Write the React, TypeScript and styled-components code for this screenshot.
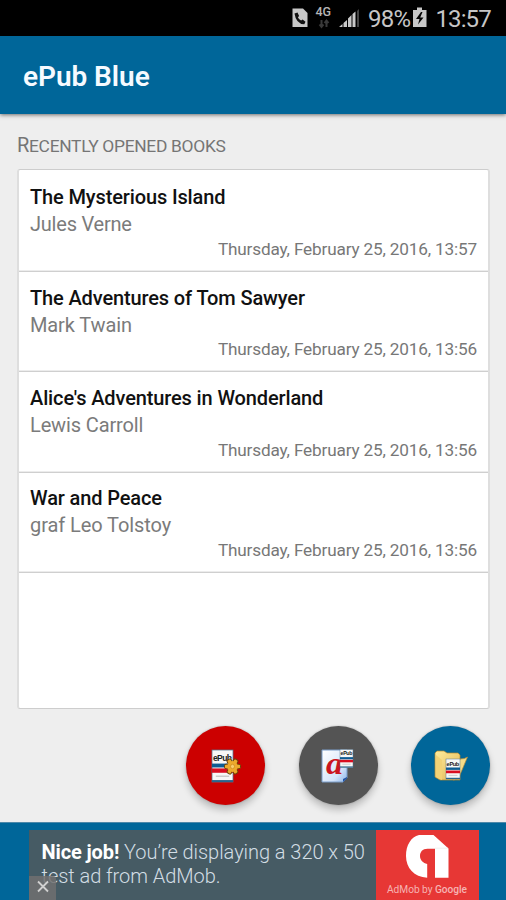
import React from 'react';
import styled, { createGlobalStyle } from 'styled-components';

const GlobalStyle = createGlobalStyle`
  * { box-sizing: border-box; }
  body { margin: 0; background: #eee; font-family: Roboto, sans-serif; }
  svg { display: block; }
`;

const Screen = styled.div`
  width: 506px;
  height: 900px;
  display: flex;
  flex-direction: column;
  overflow: hidden;
  background: #eee;
  white-space: nowrap;
`;

const StatusBar = styled.div`
  flex: none;
  height: 36px;
  display: flex;
  align-items: center;
  background: #000;
  color: #c6c6c6;
  padding-left: 288px;
`;

const StatusIcons = styled.div`
  display: flex;
  width: 73px;
  justify-content: space-between;
`;

const StatusText = styled.span<{ $gap: number; $spacing?: number }>`
  margin-left: ${p => p.$gap}px;
  font-size: 24px;
  line-height: 36px;
  padding-top: 1px;
  letter-spacing: ${p => p.$spacing ?? 0}px;
`;

const Header = styled.header`
  flex: none;
  height: 78px;
  padding: 3px 0 0 23px;
  display: flex;
  align-items: center;
  background: #006699;
  box-shadow: 0 1px 4px rgba(0, 0, 0, 0.55);
  z-index: 1;
`;

const Title = styled.h1`
  margin: 0;
  color: #f6faff;
  font-size: 28px;
  font-weight: 600;
  letter-spacing: -0.05px;
`;

const Content = styled.main`
  flex: none;
  height: 708px;
  padding: 18px 16px 0 17px;
  display: flex;
  flex-direction: column;
`;

const SectionTitle = styled.h2`
  margin: 0;
  height: 37px;
  line-height: 27px;
  font-size: 17.4px;
  letter-spacing: -0.3px;
  font-weight: 400;
  color: #757575;
  text-transform: uppercase;
  &::first-letter { font-size: 20px; }
`;

const BookList = styled.ul`
  margin: 0;
  padding: 0;
  list-style: none;
  height: 540px;
  background: #fff;
  border: 1px solid #cdcdcd;
  border-left: 2px solid #dedede;
  border-right: 2px solid #dedede;
  border-radius: 3px;
`;

const BookRow = styled.li`
  height: 100.33px;
  padding: 12.7px 11px 0;
  display: flex;
  flex-direction: column;
  box-shadow: inset 0 -1px #cfcfcf, inset 0 -2px #ececec;
  &:first-child { height: 102px; padding-top: 14px; }
`;

const BookTitle = styled.span`
  font-size: 20px;
  line-height: 27px;
  font-weight: 500;
  color: #111;
  letter-spacing: -0.13px;
`;

const Author = styled.span<{ $spacing: number }>`
  font-size: 20px;
  line-height: 26.5px;
  color: #7b7b7b;
  letter-spacing: ${p => p.$spacing}px;
`;

const Opened = styled.time`
  align-self: flex-end;
  font-size: 17.2px;
  line-height: 23.5px;
  letter-spacing: -0.17px;
  color: #777;
`;

const Actions = styled.div`
  display: flex;
  justify-content: flex-end;
  gap: 33.5px;
  margin-top: 17px;
`;

const RoundButton = styled.button<{ $color: string }>`
  width: 79px;
  height: 79px;
  flex: none;
  padding: 0;
  border: 0;
  border-radius: 50%;
  display: grid;
  place-items: center;
  background: ${p => p.$color};
  box-shadow: 0 5px 7px rgba(0, 0, 0, 0.22), 0 0 2px rgba(0, 0, 0, 0.25);
`;

const Banner = styled.footer`
  flex: 1;
  display: flex;
  justify-content: center;
  padding: 7px 0 0 1px;
  border-top: 1px solid #4d88a9;
  background: #006699;
`;

const Ad = styled.div`
  position: relative;
  width: 450px;
  display: flex;
  background: #465b64;
`;

const AdCopy = styled.p`
  flex: 1;
  margin: 0;
  padding: 11px 0 0 13px;
  color: #d3dee5;
  font-size: 20px;
  font-weight: 300;
  line-height: 23.5px;
`;

const AdLine = styled.span`
  display: block;
  letter-spacing: -0.05px;
`;

const AdStrong = styled.b`
  color: #fff;
  font-weight: 700;
  letter-spacing: -0.12px;
`;

const CloseBox = styled.div`
  position: absolute;
  left: 0;
  bottom: 0;
  width: 27px;
  height: 24px;
  border-top-right-radius: 3px;
  background: rgba(112, 112, 112, 0.85);
`;

const AdLogo = styled.div`
  width: 103px;
  background: #e73735;
`;

const PhoneIcon = () => (
  <svg width="20" height="26" viewBox="0 0 20 26">
    <path d="M4.500 3.500H15l4.500 4.500v14H4.500z" fill="#c8c8c8" />
    <path d="M6.500 8.500l3-1 1.600 3.500-1.200 1.300q1 2.500 3.200 3.300l1.500-1.100 2.900 2.300-1.200 2.500Q8 19 6.500 8.500z" fill="#111" />
  </svg>
);

const NetworkIcon = () => (
  <svg width="18" height="26" viewBox="0 0 18 26">
    <text x="0.500" y="11" fontSize="12.500" fontWeight="500" fill="#b5b5b5">4G</text>
    <path d="M6.500 15v6M4.500 19.500l2 2.500 2-2.500M11.500 22v-6M9.500 18l2-2.500 2 2.500" stroke="#393939" strokeWidth="2" fill="none" />
  </svg>
);

const SignalIcon = () => (
  <svg width="22" height="26" viewBox="0 0 22 26">
    <path d="M0 22l3.500-3v3zM4.500 18L8 15v7H4.500zM9 13.500l3.500-3.500v12H9zM13.500 9l3-2.500V22h-3z" fill="#c8c8c8" />
    <path d="M18 6l2-2v18h-2z" fill="#444" />
  </svg>
);

const BatteryIcon = () => (
  <svg width="14" height="26" viewBox="0 0 14 26">
    <path d="M0 5h4V2.500h5V5h4.500v17H0z" fill="#c8c8c8" />
    <path d="M8 7L3 14h3.500L5 19.500l5.500-7H7.200L9.500 7z" fill="#050505" />
  </svg>
);

const BatteryGap = styled.div`
  display: flex;
  margin-left: 3px;
`;

const MiniBook = ({ x, y, w, h }: { x: number; y: number; w: number; h: number }) => (
  <g transform={`translate(${x} ${y}) scale(${w / 22} ${h / 33})`}>
    <rect width="22" height="33" fill="#f7f7f7" stroke="#55758e" strokeWidth=".8" />
    <text x="1" y="11" fontSize="9" fontWeight="700" textLength="20" fill="#222">ePub</text>
    <path d="M0 14h22v4H0z" fill="#0c5b92" />
    <path d="M0 19h22v4.500H0z" fill="#d90d20" />
    <path d="M4 27h14" stroke="#a3a3a3" strokeWidth=".8" />
    <path d="M0 31h22v2H0z" fill="#29648c" />
  </g>
);

const gearTeeth = [0, 60, 120, 180, 240, 300];

const LibraryIcon = () => (
  <svg width="36" height="36" viewBox="0 0 36 36">
    <MiniBook x={4} y={2} w={21} h={32} />
    <path d="M23 10.500v7" stroke="#c5d5df" strokeWidth="2.500" />
    <g transform="translate(24.500 18.500)">
      <g fill="#edaa2c" stroke="#6b4308" strokeWidth="1">
        {gearTeeth.map(angle => (
          <rect key={angle} x="4" y="-2.300" width="4" height="4.600" rx="1.500" transform={`rotate(${angle})`} />
        ))}
      </g>
      <circle r="5.400" fill="#edaa2c" />
      <ellipse rx="2" ry="2.200" fill="#f8cf6e" stroke="#cf8719" strokeWidth=".7" />
    </g>
  </svg>
);

const FontIcon = () => (
  <svg width="36" height="36" viewBox="0 0 36 36" overflow="visible">
    <defs>
      <linearGradient id="paper" x2="1" y2="1">
        <stop stopColor="#fff" /><stop offset=".7" stopColor="#d4e4fa" /><stop offset="1" stopColor="#8ab3e9" />
      </linearGradient>
    </defs>
    <path d="M2 2h25v28l-4 4H2z" fill="url(#paper)" stroke="#7b9dc9" />
    <path d="M23 34v-3l4-2v1.500z" fill="#2454a3" />
    <text x="6" y="26" fontFamily="Liberation Serif" fontStyle="italic" fontWeight="700" fontSize="31" textLength="17" lengthAdjust="spacingAndGlyphs" fill="#cb1520">a</text>
    <MiniBook x={20} y={1.500} w={13} h={18} />
  </svg>
);

const FolderIcon = () => (
  <svg width="36" height="36" viewBox="0 0 36 36">
    <defs>
      <linearGradient id="folder" x2="1" y2="1">
        <stop stopColor="#ffec9d" /><stop offset="1" stopColor="#dfb450" />
      </linearGradient>
    </defs>
    <path d="M2 5l2-2h7l3 2h11l2 2v25H7l-5-3z" fill="url(#folder)" stroke="#b3872d" strokeWidth=".7" />
    <path d="M20 32l7-21q5 0 7.500-2l-8 19q-2 4-6 4z" fill="#f4dc89" stroke="#b48b38" strokeWidth=".7" />
    <path d="M3 7l6 5v20l-6-3z" fill="#f2d276" />
    <MiniBook x={13} y={11} w={14} h={20} />
  </svg>
);

const AdMobLogo = () => (
  <svg width="103" height="70" viewBox="0 0 103 70">
    <path d="M43 5h14.500L72.500 18.500V47.800H59V18.800H51.500C46.500 18.800 44 22 44 26s3 7 7.200 8v13.800C38 47 30 38 30 26 30 15 35 7 43 5z" fill="#fff" />
    <path d="M59 18.200h13" stroke="#ececec" strokeWidth=".8" />
    <text x="11" y="62.500" fontSize="10.200" textLength="80" fill="#f6b3b2">AdMob by <tspan fontWeight="500">Google</tspan></text>
  </svg>
);

const CloseIcon = () => (
  <svg width="27" height="24" viewBox="0 0 27 24">
    <path d="M9 5.500l10 10M19 5.500l-10 10" stroke="#d0d0d0" strokeWidth="1.800" />
  </svg>
);

const books = [
  { title: 'The Mysterious Island', author: 'Jules Verne', time: '13:57', spacing: -0.22 },
  { title: 'The Adventures of Tom Sawyer', author: 'Mark Twain', time: '13:56', spacing: -0.12 },
  { title: "Alice's Adventures in Wonderland", author: 'Lewis Carroll', time: '13:56', spacing: -0.13 },
  { title: 'War and Peace', author: 'graf Leo Tolstoy', time: '13:56', spacing: -0.08 },
];

export default function App() {
  return (
    <Screen>
      <GlobalStyle />
      <StatusBar>
        <StatusIcons>
          <PhoneIcon />
          <NetworkIcon />
          <SignalIcon />
        </StatusIcons>
        <StatusText $gap={7} $spacing={-0.7}>98%</StatusText>
        <BatteryGap><BatteryIcon /></BatteryGap>
        <StatusText $gap={8} $spacing={-0.9}>13:57</StatusText>
      </StatusBar>
      <Header><Title>ePub Blue</Title></Header>
      <Content>
        <SectionTitle>Recently opened books</SectionTitle>
        <BookList>
          {books.map(book => (
            <BookRow key={book.title}>
              <BookTitle>{book.title}</BookTitle>
              <Author $spacing={book.spacing}>{book.author}</Author>
              <Opened>Thursday, February 25, 2016, {book.time}</Opened>
            </BookRow>
          ))}
        </BookList>
        <Actions>
          <RoundButton $color="#cc0000" aria-label="Library"><LibraryIcon /></RoundButton>
          <RoundButton $color="#545454" aria-label="Fonts"><FontIcon /></RoundButton>
          <RoundButton $color="#006699" aria-label="Open folder"><FolderIcon /></RoundButton>
        </Actions>
      </Content>
      <Banner>
        <Ad>
          <AdCopy>
            <AdLine><AdStrong>Nice job!</AdStrong> You’re displaying a 320 x 50</AdLine>
            <AdLine>test ad from AdMob.</AdLine>
          </AdCopy>
          <AdLogo><AdMobLogo /></AdLogo>
          <CloseBox><CloseIcon /></CloseBox>
        </Ad>
      </Banner>
    </Screen>
  );
}
